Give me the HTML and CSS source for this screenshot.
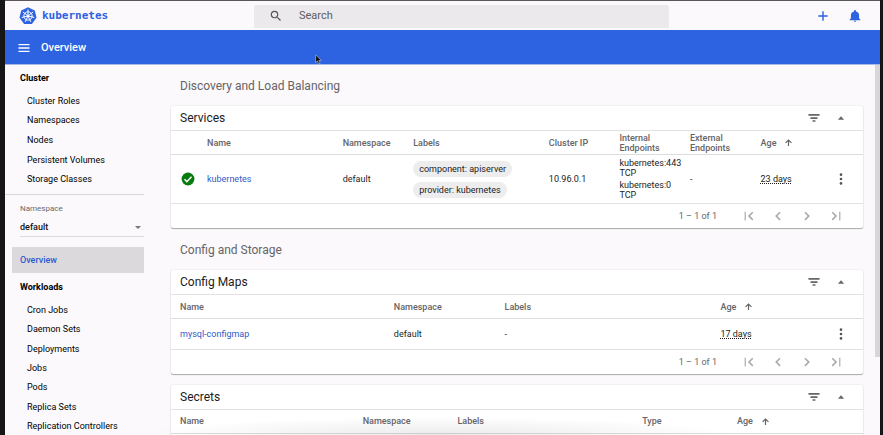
FILE: index.html
```html
<!DOCTYPE html>
<html lang="en">
<head>
<meta charset="utf-8">
<title>Kubernetes Dashboard</title>
<link rel="stylesheet" href="styles.css">
</head>
<body>
<svg class="sprite" aria-hidden="true">
  <symbol id="filter" viewBox="0 0 24 24"><path d="M9.500 18.500h5v-2.700h-5v2.700zM2.500 5.200v3h19v-3H2.500zm3.500 8.300h12v-3H6v3z"/></symbol>
  <symbol id="collapse" viewBox="0 0 24 24"><path d="M4.500 16l7.500-8 7.500 8z"/></symbol>
  <symbol id="up" viewBox="0 0 24 24"><path d="M3 12l2.200 2.200L10.400 9V21.500h3.200V9l5.200 5.200L21 12l-9-9z"/></symbol>
  <symbol id="more" viewBox="0 0 24 24"><circle cx="12" cy="4.500" r="2.300"/><circle cx="12" cy="12" r="2.300"/><circle cx="12" cy="19.500" r="2.300"/></symbol>
  <symbol id="first" viewBox="0 0 24 24"><path d="M19.410 17.590L13.820 12l5.590-5.590L17.500 4.500 10 12l7.500 7.500zM4.500 4.500h2v15h-2z"/></symbol>
  <symbol id="prev" viewBox="0 0 24 24"><path d="M16.400 6.400L14.500 4.500 7 12l7.500 7.500 1.900-1.900L10.830 12z"/></symbol>
  <symbol id="next" viewBox="0 0 24 24"><path d="M9.500 4.500L7.600 6.400 13.170 12 7.600 17.600l1.900 1.900L17 12z"/></symbol>
  <symbol id="last" viewBox="0 0 24 24"><path d="M4.590 6.410L10.180 12l-5.590 5.590L6.500 19.500 14 12 6.500 4.500zM17.500 4.500h2v15h-2z"/></symbol>
</svg>
<div class="app">
  <header class="topbar">
    <a class="brand" href="#">
      <svg class="logo" viewBox="0 0 36 36" aria-hidden="true">
        <path class="logo-shape" d="M18 .5L31.500 6.900 35 21.600 25.800 34H10.200L1 21.600 4.500 6.900z"/>
        <g class="logo-wheel">
          <circle cx="18" cy="18" r="8.300"/>
          <path d="M18 18V5M18 18L28.200 9.900M18 18L30.700 20.900M18 18L23.600 29.700M18 18L12.400 29.700M18 18L5.300 20.900M18 18L7.800 9.900"/>
        </g>
        <circle class="logo-hub" cx="18" cy="18" r="2.600"/>
      </svg>
      <span>kubernetes</span>
    </a>
    <label class="search">
      <svg viewBox="0 0 24 24" aria-hidden="true"><path d="M15.500 14h-.79l-.28-.27A6.471 6.471 0 0 0 16 9.500 6.500 6.500 0 1 0 9.500 16c1.610 0 3.090-.59 4.230-1.570l.27.28v.79l5 4.990L20.490 19l-4.990-5zm-6 0C7.010 14 5 11.990 5 9.500S7.010 5 9.500 5 14 7.010 14 9.500 11.990 14 9.500 14z"/></svg>
      <input type="text" placeholder="Search" aria-label="Search">
    </label>
    <div class="top-actions">
      <button type="button" aria-label="Create"><svg viewBox="0 0 24 24"><path d="M20 13.200h-6.800V20h-2.400v-6.800H4v-2.400h6.800V4h2.400v6.800H20z"/></svg></button>
      <button type="button" aria-label="Notifications"><svg viewBox="0 0 24 24"><path d="M12 22c1.100 0 2-.9 2-2h-4c0 1.100.9 2 2 2zm7-6v-5c0-3.500-2-5.900-5.300-6.700V3.500a1.700 1.700 0 0 0-3.400 0v.8C7 5.100 5 7.500 5 11v5l-2 2v1.300h18V18z"/></svg></button>
    </div>
  </header>
  <div class="toolbar">
    <button type="button" aria-label="Menu"><svg viewBox="0 0 24 24"><path d="M2.500 19h19v-2.200h-19zM2.500 13.100h19v-2.200h-19zM2.500 5v2.200h19V5z"/></svg></button>
    <h1>Overview</h1>
    <svg class="pointer" viewBox="0 0 12 18" aria-hidden="true"><path d="M1 1v13.500l3.200-3 2.200 5 2.400-1-2.200-4.800h4.400z"/></svg>
  </div>
  <div class="body">
    <nav class="sidebar">
      <h2>Cluster</h2>
      <ul class="five">
        <li><a href="#">Cluster Roles</a></li>
        <li><a href="#">Namespaces</a></li>
        <li><a href="#">Nodes</a></li>
        <li><a href="#">Persistent Volumes</a></li>
        <li><a href="#">Storage Classes</a></li>
      </ul>
      <div class="namespace">
        <label for="ns">Namespace</label>
        <div class="select-wrap">
          <select id="ns"><option>default</option></select>
          <svg viewBox="0 0 10 5" aria-hidden="true"><path d="M0 0h10L5 5z"/></svg>
        </div>
      </div>
      <a class="current" href="#">Overview</a>
      <h2>Workloads</h2>
      <ul class="seven">
        <li><a href="#">Cron Jobs</a></li>
        <li><a href="#">Daemon Sets</a></li>
        <li><a href="#">Deployments</a></li>
        <li><a href="#">Jobs</a></li>
        <li><a href="#">Pods</a></li>
        <li><a href="#">Replica Sets</a></li>
        <li><a href="#">Replication Controllers</a></li>
      </ul>
    </nav>
    <main>
      <h2 class="group">Discovery and Load Balancing</h2>
      <section class="card">
        <header><h3>Services</h3><button type="button" aria-label="Filter"><svg><use href="#filter"/></svg></button><button type="button" aria-label="Collapse"><svg class="small"><use href="#collapse"/></svg></button></header>
        <table class="services">
          <colgroup><col class="status"><col class="wide"><col class="narrow"><col class="wide"><col class="narrow"><col class="narrow"><col class="narrow"><col><col class="menu"></colgroup>
          <thead><tr><th></th><th>Name</th><th>Namespace</th><th>Labels</th><th>Cluster IP</th><th>Internal<br>Endpoints</th><th>External<br>Endpoints</th><th><div class="sorted">Age <svg class="sort"><use href="#up"/></svg></div></th><th></th></tr></thead>
          <tbody><tr>
            <td><svg class="ok" viewBox="0 0 24 24" aria-label="Running"><circle cx="12" cy="12" r="11"/><path d="M6 12.500l4 4 8-8.500"/></svg></td>
            <td><a href="#">kubernetes</a></td>
            <td>default</td>
            <td><div class="chips"><span>component: apiserver</span><span>provider: kubernetes</span></div></td>
            <td>10.96.0.1</td>
            <td><div class="endpoints"><span>kubernetes:443 TCP</span><span>kubernetes:0<br>TCP</span></div></td>
            <td>-</td>
            <td><span class="age">23 days</span></td>
            <td><button type="button" aria-label="Actions"><svg><use href="#more"/></svg></button></td>
          </tr></tbody>
        </table>
        <footer><span>1 – 1 of 1</span><button type="button" aria-label="First page"><svg><use href="#first"/></svg></button><button type="button" aria-label="Previous page"><svg><use href="#prev"/></svg></button><button type="button" aria-label="Next page"><svg><use href="#next"/></svg></button><button type="button" aria-label="Last page"><svg><use href="#last"/></svg></button></footer>
      </section>
      <h2 class="group">Config and Storage</h2>
      <section class="card">
        <header><h3>Config Maps</h3><button type="button" aria-label="Filter"><svg><use href="#filter"/></svg></button><button type="button" aria-label="Collapse"><svg class="small"><use href="#collapse"/></svg></button></header>
        <table class="configmaps">
          <colgroup><col class="wide"><col class="narrow"><col class="labels"><col><col class="menu"></colgroup>
          <thead><tr><th>Name</th><th>Namespace</th><th>Labels</th><th><div class="sorted">Age <svg class="sort"><use href="#up"/></svg></div></th><th></th></tr></thead>
          <tbody><tr>
            <td><a href="#">mysql-configmap</a></td><td>default</td><td>-</td><td><span class="age">17 days</span></td>
            <td><button type="button" aria-label="Actions"><svg><use href="#more"/></svg></button></td>
          </tr></tbody>
        </table>
        <footer><span>1 – 1 of 1</span><button type="button" aria-label="First page"><svg><use href="#first"/></svg></button><button type="button" aria-label="Previous page"><svg><use href="#prev"/></svg></button><button type="button" aria-label="Next page"><svg><use href="#next"/></svg></button><button type="button" aria-label="Last page"><svg><use href="#last"/></svg></button></footer>
      </section>
      <section class="card">
        <header><h3>Secrets</h3><button type="button" aria-label="Filter"><svg><use href="#filter"/></svg></button><button type="button" aria-label="Collapse"><svg class="small"><use href="#collapse"/></svg></button></header>
        <table class="secrets">
          <colgroup><col class="wide"><col class="narrow"><col class="labels"><col class="narrow"><col><col class="menu"></colgroup>
          <thead><tr><th>Name</th><th>Namespace</th><th>Labels</th><th>Type</th><th><div class="sorted">Age <svg class="sort"><use href="#up"/></svg></div></th><th></th></tr></thead>
          <tbody><tr><td></td><td></td><td></td><td></td><td></td><td></td></tr></tbody>
        </table>
      </section>
    </main>
    <div class="scrollbar"><div class="thumb"></div></div>
  </div>
</div>
</body>
</html>
```
FILE: styles.css
```css
* { box-sizing: border-box; }
body {
  margin: 0;
  background: #161617;
  font: 9px/10px Roboto, "Liberation Sans", sans-serif;
  color: #1c1c1c;
}
h1, h2, h3, ul { margin: 0; padding: 0; }
ul { list-style: none; }
a { text-decoration: none; color: inherit; }
button { border: 0; padding: 0; background: none; color: inherit; display: flex; align-items: center; justify-content: center; }
svg { display: block; width: 14px; height: 14px; fill: currentColor; flex: none; }
.sprite { position: absolute; width: 0; height: 0; }

.app {
  position: relative;
  height: 100vh;
  display: flex;
  flex-direction: column;
  margin: 0 3px 0 5px;
  border-top: 1px solid #5c565c;
  background: #fbf9fb;
  overflow: hidden;
}
/* soft shade that rises from the bottom edge of the window */
.app::after {
  content: "";
  position: absolute;
  left: 15%;
  right: 16%;
  bottom: 0;
  height: 18px;
  background: radial-gradient(ellipse at bottom, rgba(60, 50, 70, .1), rgba(60, 50, 70, 0) 70%);
  pointer-events: none;
}
.topbar { display: flex; align-items: center; height: 29px; flex: none; padding: 1px 18px 0 14px; color: #2d62e1; }
.brand { display: flex; align-items: center; gap: 5px; width: 235px; font: bold 11px/14px "DejaVu Sans Mono", monospace; }
.brand .logo { width: 18px; height: 18px; }
.logo-wheel { fill: none; stroke: #fff; stroke-width: 2; }
.logo-hub { fill: #fff; }
.search { display: flex; align-items: center; gap: 16px; flex: 1; height: 23px; padding-left: 15px; background: #ebe9eb; border-radius: 2px; color: #555; }
.search input { flex: 1; min-width: 0; border: 0; padding: 0; background: none; font: 11px/14px Roboto, sans-serif; outline: 0; }
.search input::placeholder { color: #5f5d60; opacity: 1; }
.top-actions { display: flex; gap: 18px; margin-left: 147px; }

.toolbar { position: relative; display: flex; align-items: center; gap: 10px; height: 35px; flex: none; padding: 2px 0 0 12px; background: #2d62e1; border-bottom: 1px solid #a9b9e6; color: #fff; }
.toolbar h1 { font: 500 11px/14px Roboto, sans-serif; }
.pointer { position: absolute; left: 310px; top: 24px; width: 7px; height: 11px; fill: #111; stroke: #b8c6f2; stroke-width: 1; overflow: visible; z-index: 2; }

.body { display: flex; flex: 1; min-height: 0; }
.sidebar { width: 139px; flex: none; color: #000; }
.sidebar h2 { font: bold 9px/12px Roboto, sans-serif; padding: 7px 15px 0; }
.sidebar ul { display: grid; grid-auto-rows: 1fr; margin-top: 7px; padding-left: 22px; }
.sidebar li { display: flex; align-items: center; white-space: nowrap; }
.five { min-height: 98px; }
.seven { min-height: 136px; }
.namespace { margin-top: 5px; border-top: 1px solid #d8d6d8; padding: 8px 0 0 15px; }
.namespace label { color: #6b696c; font-size: 8px; line-height: 12px; }
.select-wrap { display: flex; align-items: center; margin-top: 4px; padding-right: 3px; border-bottom: 1px solid #dddbdd; color: #777; }
.select-wrap select { appearance: none; flex: 1; border: 0; padding: 0; background: none; color: #111; font: 500 9px/17px Roboto, sans-serif; }
.select-wrap svg { width: 6px; height: 3px; }
.current { display: block; margin: 10px 0 1px 7px; padding: 7px 8px; line-height: 12px; font-weight: 500; background: #dbd9dc; border-radius: 1px; color: #2d5bd0; }

main { flex: 1; min-width: 0; padding: 0 12px 0 27px; }
.group { font: 400 12px/16px Roboto, sans-serif; color: #666467; padding: 13px 9px 12px; }
.card { background: #fff; border-radius: 2px; box-shadow: 0 1px 1px rgba(0,0,0,.3), 0 0 2px rgba(0,0,0,.12); }
.card + .group { padding-top: 14px; }
.card + .card { margin-top: 11px; }
.card > header { display: flex; align-items: center; height: 24px; padding: 0 15px 0 9px; gap: 13px; color: #666; }
.card h3 { margin-right: auto; font: 400 12px/16px Roboto, sans-serif; color: #1c1c1c; }
.card svg.small { width: 10px; height: 10px; margin: 0 2px; }
table { width: 100%; table-layout: fixed; border-collapse: collapse; }
th { height: 24px; padding: 0; border-top: 1px solid #e2e2e2; text-align: left; font-weight: 500; color: #666467; }
td { height: 30px; padding: 0; border-top: 1px solid #dcdcdc; }
td a { color: #2d5bc8; }
.configmaps th:first-child, .configmaps td:first-child, .secrets th:first-child { padding-left: 9px; }
.sorted { display: flex; align-items: center; gap: 8px; }
.sort { width: 9px; height: 9px; }
.status { width: 36px; }
.menu { width: 44px; }
.services .wide { width: 19.6%; }
.services .narrow { width: 10.2%; }
.configmaps .wide { width: 32.2%; }
.configmaps .narrow { width: 16%; }
.configmaps .labels { width: 31.2%; }
.secrets .wide { width: 27.7%; }
.secrets .narrow { width: 13.7%; }
.secrets .labels { width: 26.7%; }
td button { margin: 0 auto; color: #555; }
.ok { width: 14px; height: 14px; margin-left: 10px; fill: #087b10; }
.ok path { fill: none; stroke: #fff; stroke-width: 2.500; }
.chips { display: flex; flex-direction: column; align-items: flex-start; gap: 5px; white-space: nowrap; }
.chips span { padding: 0 6px; line-height: 16px; border-radius: 8px; background: #eeedee; }
.endpoints { display: flex; flex-direction: column; gap: 2px; padding: 3px 0; }
.age { text-decoration: underline dotted 1px; text-underline-offset: 1px; }
.card footer { display: flex; align-items: center; justify-content: flex-end; height: 25px; padding-right: 20px; border-top: 1px solid #e2e2e2; color: #aaa; gap: 15px; }
.card footer span { margin-right: 10px; color: #666467; }

.scrollbar { width: 5px; flex: none; }
.thumb { height: 79%; background: #d8d6d8; }
```
